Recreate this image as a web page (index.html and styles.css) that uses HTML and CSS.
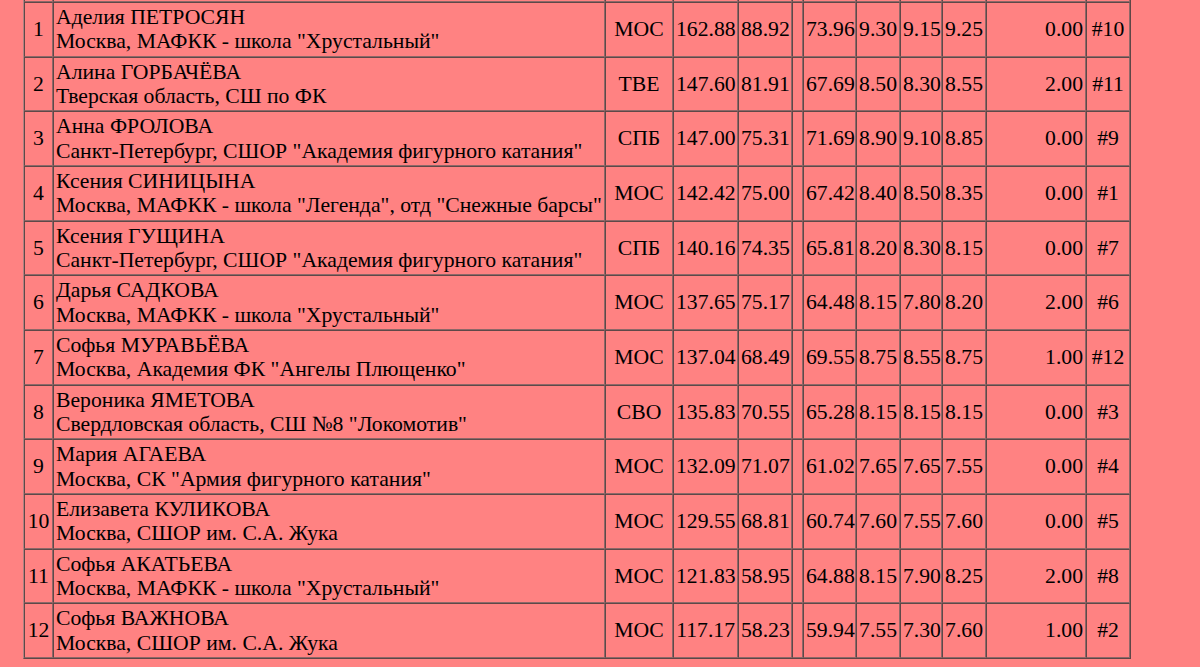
FILE: index.html
```html
<!DOCTYPE html>
<html lang="ru">
<head>
<meta charset="utf-8">
<title>Результаты</title>
<link rel="stylesheet" href="styles.css">
</head>
<body>
<table class="res">
  <tr class="head">
    <td class="c1"></td><td class="c2"></td><td class="c3"></td><td class="c4"></td><td class="c5"></td><td class="c6"></td><td class="c7"></td><td class="c8"></td><td class="c9"></td><td class="c10"></td><td class="c11"></td><td class="c12"></td>
  </tr>
  <tr><td class="pl">1</td><td class="nm">Аделия ПЕТРОСЯН<br>Москва, МАФКК - школа "Хрустальный"</td><td class="ct">МОС</td><td class="num">162.88</td><td class="num">88.92</td><td></td><td class="num">73.96</td><td class="num">9.30</td><td class="num">9.15</td><td class="num">9.25</td><td class="num">0.00</td><td class="ct">#10</td></tr>
  <tr><td class="pl">2</td><td class="nm">Алина ГОРБАЧЁВА<br>Тверская область, СШ по ФК</td><td class="ct">ТВЕ</td><td class="num">147.60</td><td class="num">81.91</td><td></td><td class="num">67.69</td><td class="num">8.50</td><td class="num">8.30</td><td class="num">8.55</td><td class="num">2.00</td><td class="ct">#11</td></tr>
  <tr><td class="pl">3</td><td class="nm">Анна ФРОЛОВА<br>Санкт-Петербург, СШОР "Академия фигурного катания"</td><td class="ct">СПБ</td><td class="num">147.00</td><td class="num">75.31</td><td></td><td class="num">71.69</td><td class="num">8.90</td><td class="num">9.10</td><td class="num">8.85</td><td class="num">0.00</td><td class="ct">#9</td></tr>
  <tr><td class="pl">4</td><td class="nm">Ксения СИНИЦЫНА<br>Москва, МАФКК - школа "Легенда", отд "Снежные барсы"</td><td class="ct">МОС</td><td class="num">142.42</td><td class="num">75.00</td><td></td><td class="num">67.42</td><td class="num">8.40</td><td class="num">8.50</td><td class="num">8.35</td><td class="num">0.00</td><td class="ct">#1</td></tr>
  <tr><td class="pl">5</td><td class="nm">Ксения ГУЩИНА<br>Санкт-Петербург, СШОР "Академия фигурного катания"</td><td class="ct">СПБ</td><td class="num">140.16</td><td class="num">74.35</td><td></td><td class="num">65.81</td><td class="num">8.20</td><td class="num">8.30</td><td class="num">8.15</td><td class="num">0.00</td><td class="ct">#7</td></tr>
  <tr><td class="pl">6</td><td class="nm">Дарья САДКОВА<br>Москва, МАФКК - школа "Хрустальный"</td><td class="ct">МОС</td><td class="num">137.65</td><td class="num">75.17</td><td></td><td class="num">64.48</td><td class="num">8.15</td><td class="num">7.80</td><td class="num">8.20</td><td class="num">2.00</td><td class="ct">#6</td></tr>
  <tr><td class="pl">7</td><td class="nm">Софья МУРАВЬЁВА<br>Москва, Академия ФК "Ангелы Плющенко"</td><td class="ct">МОС</td><td class="num">137.04</td><td class="num">68.49</td><td></td><td class="num">69.55</td><td class="num">8.75</td><td class="num">8.55</td><td class="num">8.75</td><td class="num">1.00</td><td class="ct">#12</td></tr>
  <tr><td class="pl">8</td><td class="nm">Вероника ЯМЕТОВА<br>Свердловская область, СШ №8 "Локомотив"</td><td class="ct">СВО</td><td class="num">135.83</td><td class="num">70.55</td><td></td><td class="num">65.28</td><td class="num">8.15</td><td class="num">8.15</td><td class="num">8.15</td><td class="num">0.00</td><td class="ct">#3</td></tr>
  <tr><td class="pl">9</td><td class="nm">Мария АГАЕВА<br>Москва, СК "Армия фигурного катания"</td><td class="ct">МОС</td><td class="num">132.09</td><td class="num">71.07</td><td></td><td class="num">61.02</td><td class="num">7.65</td><td class="num">7.65</td><td class="num">7.55</td><td class="num">0.00</td><td class="ct">#4</td></tr>
  <tr><td class="pl">10</td><td class="nm">Елизавета КУЛИКОВА<br>Москва, СШОР им. С.А. Жука</td><td class="ct">МОС</td><td class="num">129.55</td><td class="num">68.81</td><td></td><td class="num">60.74</td><td class="num">7.60</td><td class="num">7.55</td><td class="num">7.60</td><td class="num">0.00</td><td class="ct">#5</td></tr>
  <tr><td class="pl">11</td><td class="nm">Софья АКАТЬЕВА<br>Москва, МАФКК - школа "Хрустальный"</td><td class="ct">МОС</td><td class="num">121.83</td><td class="num">58.95</td><td></td><td class="num">64.88</td><td class="num">8.15</td><td class="num">7.90</td><td class="num">8.25</td><td class="num">2.00</td><td class="ct">#8</td></tr>
  <tr><td class="pl">12</td><td class="nm">Софья ВАЖНОВА<br>Москва, СШОР им. С.А. Жука</td><td class="ct">МОС</td><td class="num">117.17</td><td class="num">58.23</td><td></td><td class="num">59.94</td><td class="num">7.55</td><td class="num">7.30</td><td class="num">7.60</td><td class="num">1.00</td><td class="ct">#2</td></tr>
</table>
</body>
</html>
```

FILE: styles.css
```css
body {
  margin: 0;
  background: #ff8282;
  font-family: "Liberation Serif", serif;
  font-size: 21.7px;
  color: #000;
}
.res {
  table-layout: fixed;
  width: 1108px;
  border-spacing: 0;
  margin: -20px 0 0 23px;
  border: 1px solid;
  border-color: #b08282 #5e4646 #5e4646 #b08282;
  font-family: "Liberation Serif", serif;
  font-size: 21.7px;
}
.res td {
  box-sizing: border-box;
  font-family: "Liberation Serif", serif;
  border: 1px solid;
  border-color: #5f4848 #8e6868 #8e6868 #5f4848;
  padding: 2px 2px;
  line-height: 24.33px;
  white-space: nowrap;
  vertical-align: middle;
}
.res .head { height: 21px; }
.res .head td { padding: 0; line-height: 1px; }
.c1 { width: 29px; }
.c2 { width: 552px; }
.c3 { width: 68px; }
.c4 { width: 65px; }
.c5 { width: 54px; }
.c6 { width: 11px; }
.c7 { width: 53px; }
.c8 { width: 44px; }
.c9 { width: 42px; }
.c10 { width: 44px; }
.c11 { width: 100px; }
.c12 { width: 44px; }
.pl, .ct { text-align: center; }
.nm { text-align: left; padding-left: 3px; }
.num { text-align: right; }
```
